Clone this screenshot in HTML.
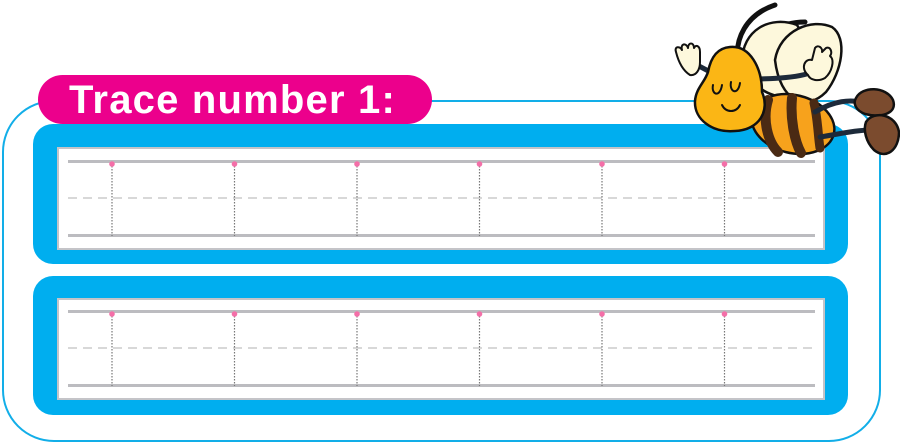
<!DOCTYPE html>
<html><head><style>
html,body{margin:0;padding:0;background:#fff;}
body{width:900px;height:444px;position:relative;overflow:hidden;font-family:"Liberation Sans",sans-serif;}
.outer{position:absolute;left:2px;top:100px;width:875px;height:338px;border:2.5px solid #12aee8;border-radius:52px;}
.pill{position:absolute;left:38px;top:75px;width:394px;height:49px;background:#ec008c;border-radius:25px;color:#fff;font-weight:bold;font-size:40px;line-height:50px;padding-left:31px;box-sizing:border-box;letter-spacing:1.2px;}
.box{position:absolute;left:33px;width:815px;background:#00aeef;border-radius:20px;}
.inner{position:absolute;left:24px;width:768px;background:#fff;border:2px solid #c4c4c8;box-sizing:border-box;}
</style></head><body>
<div class="outer"></div>
<div class="pill">Trace number 1:</div>
<div class="box" style="top:124px;height:140px"><div class="inner" style="top:23px;height:103px"></div></div>
<div class="box" style="top:276px;height:139px"><div class="inner" style="top:22px;height:102px"></div></div>
<svg width="900" height="444" style="position:absolute;left:0;top:0">
<g id="r1">
<line x1="68" x2="815" y1="161.5" y2="161.5" stroke="#bcbcc0" stroke-width="3"/>
<line x1="68" x2="815" y1="198" y2="198" stroke="#ccc" stroke-width="1.5" stroke-dasharray="9,6"/>
<line x1="68" x2="815" y1="235.5" y2="235.5" stroke="#bcbcc0" stroke-width="3"/>
<g stroke="#777" stroke-width="1.2" stroke-dasharray="1.5,1.5">
<line x1="112" x2="112" y1="163" y2="236"/><line x1="234.5" x2="234.5" y1="163" y2="236"/><line x1="357" x2="357" y1="163" y2="236"/><line x1="479.5" x2="479.5" y1="163" y2="236"/><line x1="602" x2="602" y1="163" y2="236"/><line x1="724.5" x2="724.5" y1="163" y2="236"/>
</g>
<g fill="#f46fa8"><circle cx="112" cy="164" r="2.8"/><circle cx="234.5" cy="164" r="2.8"/><circle cx="357" cy="164" r="2.8"/><circle cx="479.5" cy="164" r="2.8"/><circle cx="602" cy="164" r="2.8"/><circle cx="724.5" cy="164" r="2.8"/></g>
</g>
<use href="#r1" y="150"/>
<!-- bee -->
<g stroke="#111" stroke-width="2.5" stroke-linejoin="round" stroke-linecap="round">
<path d="M738 60 C735 40 745 15 775 5" fill="none" stroke-width="5"/>
<path d="M752 55 C760 35 780 22 805 22" fill="none" stroke-width="5"/>
<path d="M742 62 C742 30 770 15 797 25 C808 40 802 80 787 97 C765 97 748 82 742 62Z" fill="#fdf8dc"/>
<path d="M775 60 C780 30 812 18 832 27 C848 38 842 72 826 92 C806 112 780 102 775 60Z" fill="#fdf8dc"/>
<ellipse cx="793" cy="124" rx="42" ry="29" transform="rotate(14 793 124)" fill="#f7a21c"/>
<path d="M768 100 C762 120 768 142 778 152" fill="none" stroke="#4a2a14" stroke-width="10"/>
<path d="M792 98 C790 120 795 142 801 153" fill="none" stroke="#4a2a14" stroke-width="10"/>
<path d="M814 103 C818 120 818 136 820 148" fill="none" stroke="#4a2a14" stroke-width="9"/>
<path d="M815 112 C835 100 850 100 862 102" fill="none" stroke="#1d2a3a" stroke-width="5"/>
<path d="M820 137 C840 134 855 130 872 130" fill="none" stroke="#1d2a3a" stroke-width="5"/>
<path d="M856 98 C862 86 886 86 893 100 C898 114 880 118 865 114 C855 110 853 103 856 98Z" fill="#7b4b2e"/>
<path d="M866 122 C874 110 896 114 899 132 C899 150 886 160 874 150 C866 142 863 130 866 122Z" fill="#7b4b2e"/>
<path d="M750 78 C760 80 800 78 812 72" fill="none" stroke="#1d2a3a" stroke-width="5"/>
<path d="M808 75 C800 68 805 58 812 60 L815 48 C818 44 823 48 822 52 L826 48 C830 46 833 52 830 56 C835 60 832 72 825 78 C818 82 810 80 808 75Z" fill="#fdf8dc" stroke-width="2"/>
<path d="M697 65 L716 75" fill="none" stroke="#1d2a3a" stroke-width="5"/>
<path d="M690 75 C682 70 678 60 676 52 C674 46 680 46 682 50 C680 44 686 42 688 48 C688 42 694 42 694 48 C696 44 700 46 700 52 L700 62 C700 70 696 76 690 75Z" fill="#fdf8dc" stroke-width="2"/>
<path d="M730 47 C750 45 762 68 762 92 C770 110 760 130 735 131 C713 133 694 120 695 101 C696 88 705 82 708 72 C711 56 718 48 730 47Z" fill="#fbb615"/>
<path d="M713 85 C711 95 720 98 722 85 M731 82 C729 92 738 96 740 83" fill="none" stroke-width="2"/>
<path d="M722 105 C726 113 736 113 740 105" fill="none" stroke-width="2"/>
</g>
</svg>
</body></html>
